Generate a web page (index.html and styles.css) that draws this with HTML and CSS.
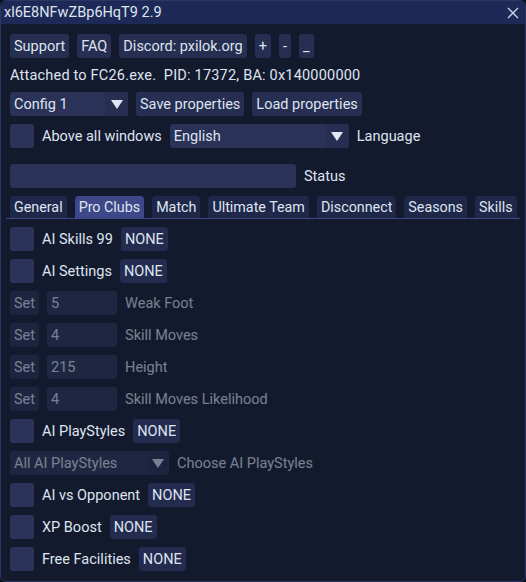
FILE: index.html
```html
<!DOCTYPE html>
<html lang="en">
<head>
  <meta charset="UTF-8">
  <title>xl6E8NFwZBp6HqT9 2.9</title>
  <link rel="stylesheet" href="styles.css">
</head>
<body>

  <div class="window">
    <div class="titlebar">
      <span class="title">xl6E8NFwZBp6HqT9 2.9</span>
      <svg class="close" width="12" height="12" viewBox="0 0 12 12">
        <path d="M1 1 L11 11 M11 1 L1 11" stroke="#c9d1ea" stroke-width="1.4" fill="none"/>
      </svg>
    </div>

    <div class="content">
      <div class="row">
        <span class="btn">Support</span>
        <span class="btn">FAQ</span>
        <span class="btn">Discord: pxilok.org</span>
        <span class="btn">+</span>
        <span class="btn">-</span>
        <span class="btn">_</span>
      </div>

      <div class="row row-text attached">Attached to FC26.exe.&nbsp; PID: 17372, BA: 0x140000000</div>

      <div class="row">
        <div class="combo combo-config">
          <span class="combo-value">Config 1</span>
          <span class="combo-arrow"><svg width="12" height="10" viewBox="0 0 12 10"><polygon points="0,1 12,1 6,10" fill="#e2e6f2"/></svg></span>
        </div>
        <span class="btn">Save properties</span>
        <span class="btn">Load properties</span>
      </div>

      <div class="row">
        <span class="check"></span>
        <span class="label">Above all windows</span>
        <div class="combo combo-lang">
          <span class="combo-value">English</span>
          <span class="combo-arrow"><svg width="12" height="10" viewBox="0 0 12 10"><polygon points="0,1 12,1 6,10" fill="#e2e6f2"/></svg></span>
        </div>
        <span class="label">Language</span>
      </div>

      <div class="row spaced">
        <span class="input input-status"></span>
        <span class="label">Status</span>
      </div>

      <div class="tabbar">
        <span class="tab">General</span>
        <span class="tab active">Pro Clubs</span>
        <span class="tab">Match</span>
        <span class="tab">Ultimate Team</span>
        <span class="tab">Disconnect</span>
        <span class="tab">Seasons</span>
        <span class="tab">Skills</span>
      </div>

      <div class="row">
        <span class="check"></span>
        <span class="label">AI Skills 99</span>
        <span class="btn btn-key">NONE</span>
      </div>

      <div class="row">
        <span class="check"></span>
        <span class="label">AI Settings</span>
        <span class="btn btn-key">NONE</span>
      </div>

      <div class="row disabled">
        <span class="btn">Set</span>
        <span class="input input-num">5</span>
        <span class="label">Weak Foot</span>
      </div>

      <div class="row disabled">
        <span class="btn">Set</span>
        <span class="input input-num">4</span>
        <span class="label">Skill Moves</span>
      </div>

      <div class="row disabled">
        <span class="btn">Set</span>
        <span class="input input-num">215</span>
        <span class="label">Height</span>
      </div>

      <div class="row disabled">
        <span class="btn">Set</span>
        <span class="input input-num">4</span>
        <span class="label">Skill Moves Likelihood</span>
      </div>

      <div class="row">
        <span class="check"></span>
        <span class="label">AI PlayStyles</span>
        <span class="btn btn-key">NONE</span>
      </div>

      <div class="row disabled">
        <div class="combo combo-styles">
          <span class="combo-value">All AI PlayStyles</span>
          <span class="combo-arrow"><svg width="12" height="10" viewBox="0 0 12 10"><polygon points="0,1 12,1 6,10" fill="#e2e6f2"/></svg></span>
        </div>
        <span class="label">Choose AI PlayStyles</span>
      </div>

      <div class="row">
        <span class="check"></span>
        <span class="label">AI vs Opponent</span>
        <span class="btn btn-key">NONE</span>
      </div>

      <div class="row">
        <span class="check"></span>
        <span class="label">XP Boost</span>
        <span class="btn btn-key">NONE</span>
      </div>

      <div class="row">
        <span class="check"></span>
        <span class="label">Free Facilities</span>
        <span class="btn btn-key">NONE</span>
      </div>
    </div>
  </div>

</body>
</html>
```

FILE: styles.css
```css
* {
  box-sizing: border-box;
}

body {
  margin: 0;
  background-color: #0c111e;
  font-family: Roboto, "Liberation Sans", sans-serif;
  font-size: 14.5px;
  color: #dfe4f0;
}

.window {
  width: 526px;
  height: 582px;
  background-color: #131a2e;
  border: 1px solid #2c3663;
  border-radius: 6px;
  overflow: hidden;
}

.titlebar {
  height: 23px;
  background-color: #1d2956;
  display: flex;
  align-items: center;
  justify-content: space-between;
  padding: 0 6px 0 3px;
}

.title {
  white-space: nowrap;
}

.content {
  display: flex;
  flex-direction: column;
  gap: 8px;
  padding: 10px 9px;
}

.row {
  display: flex;
  align-items: center;
  gap: 8px;
  height: 24px;
  white-space: nowrap;
}

.row-text {
  height: 18px;
}

.attached {
  letter-spacing: 0.2px;
}

.spaced {
  margin-top: 8px;
}

.btn {
  display: flex;
  align-items: center;
  height: 24px;
  padding: 0 4px;
  background-color: #262e51;
  border-radius: 3px;
}

.btn-key {
  background-color: #232b4f;
}

.check {
  width: 24px;
  height: 24px;
  background-color: #2b3359;
  border-radius: 3px;
}

.input {
  display: flex;
  align-items: center;
  height: 24px;
  padding: 0 4px;
  background-color: #2a3257;
  border-radius: 3px;
}

.input-status {
  width: 286px;
}

.input-num {
  width: 70px;
}

.combo {
  display: flex;
  height: 24px;
  border-radius: 3px;
  overflow: hidden;
  background-color: #2a3257;
}

.combo-value {
  flex: 1;
  display: flex;
  align-items: center;
  padding: 0 4px;
}

.combo-arrow {
  width: 23px;
  display: flex;
  align-items: center;
  justify-content: center;
  background-color: #262e51;
}

.combo-config {
  width: 118px;
}

.combo-lang {
  width: 179px;
}

.combo-styles {
  width: 159px;
}

.disabled {
  opacity: 0.5;
}

.tabbar {
  display: flex;
  gap: 8px;
  height: 23px;
  margin: 0 -4px 0 -4px;
  padding: 0 4px;
  border-bottom: 1px solid #3c4887;
  font-size: 14.3px;
  white-space: nowrap;
}

.tab {
  display: flex;
  align-items: center;
  height: 22px;
  padding: 0 4px;
  background-color: #20284a;
  border-radius: 4px 4px 0 0;
}

.tab.active {
  background-color: #3c4887;
}
```
